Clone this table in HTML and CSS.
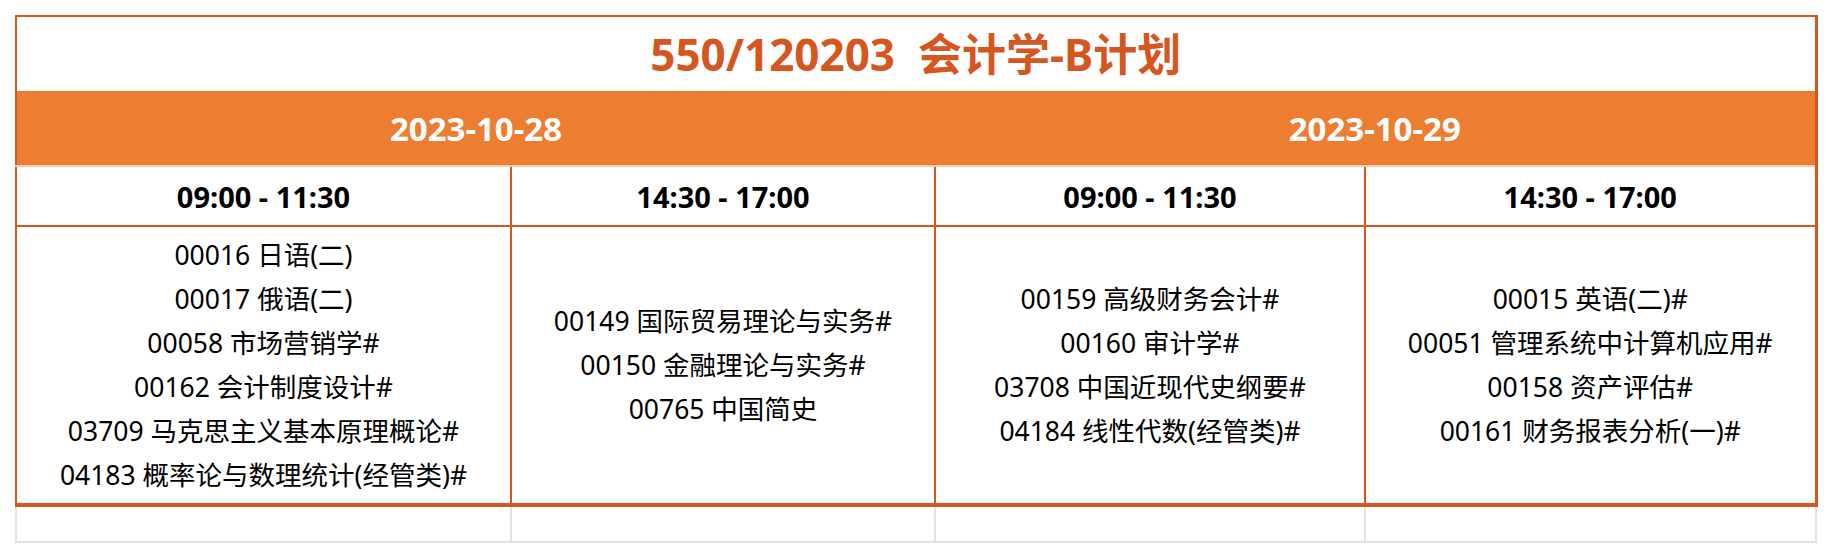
FILE: index.html
```html
<!DOCTYPE html>
<html lang="zh-CN">
<head>
<meta charset="utf-8">
<title>550/120203 会计学-B计划</title>
<link rel="stylesheet" href="styles.css">
</head>
<body>
<table class="schedule">
  <colgroup>
    <col class="col-a">
    <col class="col-b">
    <col class="col-c">
    <col class="col-d">
  </colgroup>
  <thead>
    <tr class="title-row">
      <th colspan="4" class="title">550/120203&nbsp;&nbsp;会计学-B计划</th>
    </tr>
    <tr class="date-row">
      <th colspan="2" class="date first">2023-10-28</th>
      <th colspan="2" class="date last">2023-10-29</th>
    </tr>
    <tr class="time-row">
      <th class="time">09:00 - 11:30</th>
      <th class="time">14:30 - 17:00</th>
      <th class="time">09:00 - 11:30</th>
      <th class="time">14:30 - 17:00</th>
    </tr>
  </thead>
  <tbody>
    <tr class="course-row">
      <td class="courses">
        <div class="course">00016 日语(二)</div>
        <div class="course">00017 俄语(二)</div>
        <div class="course">00058 市场营销学#</div>
        <div class="course">00162 会计制度设计#</div>
        <div class="course">03709 马克思主义基本原理概论#</div>
        <div class="course">04183 概率论与数理统计(经管类)#</div>
      </td>
      <td class="courses">
        <div class="course">00149 国际贸易理论与实务#</div>
        <div class="course">00150 金融理论与实务#</div>
        <div class="course">00765 中国简史</div>
      </td>
      <td class="courses">
        <div class="course">00159 高级财务会计#</div>
        <div class="course">00160 审计学#</div>
        <div class="course">03708 中国近现代史纲要#</div>
        <div class="course">04184 线性代数(经管类)#</div>
      </td>
      <td class="courses">
        <div class="course">00015 英语(二)#</div>
        <div class="course">00051 管理系统中计算机应用#</div>
        <div class="course">00158 资产评估#</div>
        <div class="course">00161 财务报表分析(一)#</div>
      </td>
    </tr>
    <tr class="blank-row">
      <td class="blank"></td>
      <td class="blank"></td>
      <td class="blank"></td>
      <td class="blank"></td>
    </tr>
  </tbody>
</table>
</body>
</html>
```

FILE: styles.css
```css
html, body {
  margin: 0;
  padding: 0;
  background: #ffffff;
}

body {
  font-family: "Noto Sans", "Noto Sans CJK SC", sans-serif;
  color: #000000;
}

.schedule {
  border-collapse: collapse;
  table-layout: fixed;
  width: 1800px;
  margin: 15px 0 0 15px;
}

.col-a { width: 495px; }
.col-b { width: 424px; }
.col-c { width: 430px; }
.col-d { width: 451px; }

.schedule th,
.schedule td {
  padding: 0;
  text-align: center;
  vertical-align: middle;
}

.title {
  height: 74px;
  border-top: 2px solid #d6561f;
  border-left: 2px solid #d6561f;
  border-right: 3px solid #d6561f;
  color: #d6561f;
  font-size: 44px;
  font-weight: 700;
  line-height: 1;
}

.date {
  height: 74px;
  background: #ed7d31;
  color: #ffffff;
  font-size: 33px;
  font-weight: 700;
  line-height: 1;
  border-bottom: 2px solid #f8cbad;
}

.date.first { border-left: 2px solid #d6561f; }
.date.last { border-right: 3px solid #d6561f; }

.time {
  height: 58px;
  font-size: 29px;
  font-weight: 700;
  line-height: 1;
  border-left: 2px solid #d6561f;
  border-right: 2px solid #d6561f;
  border-bottom: 2px solid #d6561f;
}

.time-row .time:last-child { border-right-width: 3px; }

.courses {
  height: 276px;
  font-size: 26.5px;
  line-height: 44px;
  border-left: 2px solid #d6561f;
  border-right: 2px solid #d6561f;
  border-bottom: 4px solid #d6561f;
}

.course-row .courses:last-child { border-right-width: 3px; }

.course {
  white-space: nowrap;
}

.blank {
  height: 34px;
  border-left: 2px solid #e3e3e3;
  border-right: 2px solid #e3e3e3;
  border-bottom: 2px solid #e3e3e3;
}
```
